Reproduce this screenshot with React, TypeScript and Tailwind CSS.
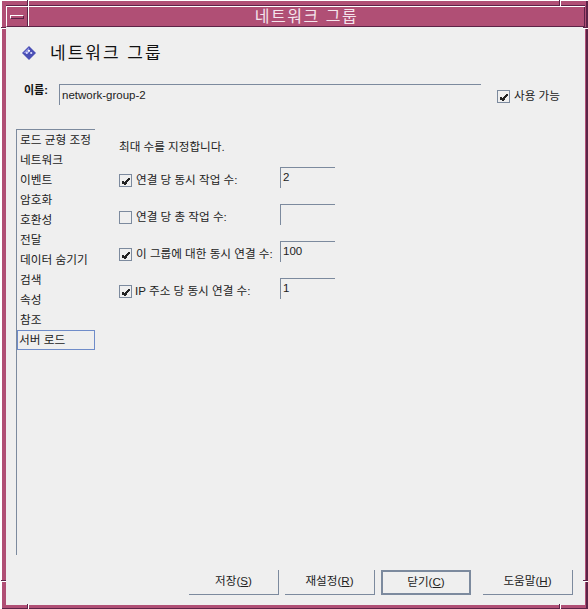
import React from "react";

const font = { fontFamily: '"Liberation Sans","Noto Sans CJK KR",sans-serif' };

function Check({ on }: { on: boolean }) {
  return (
    <span className="block w-[13px] h-[13px] border border-[#7c8a9e] shrink-0 relative">
      {on && (
        <svg className="absolute left-[1px] top-[1px]" width="11" height="11" viewBox="0 0 11 11" shapeRendering="crispEdges">
          <path d="M1 5h2v1h1V5h1V4h1V3h1V2h2v2H8v1H7v1H6v2H5v1H3V8H1z" fill="#222" />
        </svg>
      )}
    </span>
  );
}

function Row({ on, label, value, gap }: { on: boolean; label: string; value: string; gap: string }) {
  return (
    <div className="flex h-[21px] mb-4 items-start">
      <div className="mt-[7px]"><Check on={on} /></div>
      <span className={`flex-1 whitespace-nowrap text-[11.6px] leading-[14px] mt-[6px] ${gap}`}>{label}</span>
      <div className="w-[55px] h-[21px] border-l border-t border-[#7c8a9e] pl-[2px] pt-[2px] text-[11.5px] leading-[14px] text-[#222]">{value}</div>
    </div>
  );
}

const items = ["로드 균형 조정", "네트워크", "이벤트", "암호화", "호환성", "전달", "데이터 숨기기", "검색", "속성", "참조"];

function Btn({ label, u, active }: { label: string; u: string; active?: boolean }) {
  const cls = active
    ? "border-2 border-[#7c8a9e]"
    : "border-r border-b border-[#7c8a9e]";
  return (
    <button className={`w-[90px] h-[25px] pb-[2px] ${cls} text-[11.6px] leading-[14px] text-[#222] flex items-center justify-center`}>
      {label}(<span className="underline">{u}</span>)
    </button>
  );
}

export default function App() {
  return (
    <div style={font} className="w-[588px] h-[609px] relative bg-white pl-[2px] pt-[1px] text-[#222]">
      <div className="w-[586px] h-[608px] bg-[#b04f75] border-r-2 border-b border-[#5c2347] pt-[4px] pl-[4px] pr-[1px] pb-[3px] flex flex-col">
        <div className="flex-1 flex flex-col border-t border-[#5c2347] min-h-0">
          <div className="border-t border-l border-white border-r-0 flex h-[21px] border-b border-b-[#5c2347]">
            <div className="w-[21px] border-r border-[#5c2347] relative">
              <div className="absolute left-[3px] top-[8px] w-[14px] h-[4px] border-t border-l border-white border-r border-b border-r-[#5c2347] border-b-[#5c2347]" />
            </div>
            <div className="flex-1 border-l border-white border-r border-r-[#5c2347] text-center text-[#f4e4ec] text-[16px] leading-[19px] tracking-[1.5px]">네트워크 그룹</div>
          </div>
          <div className="flex-1 bg-[#efefef] flex flex-col min-h-0 pl-[10px]">
            <div className="flex items-center h-[50px] pt-[2px] pl-[6px]">
              <svg width="14" height="14" viewBox="0 0 14 14">
                <path d="M7 0l7 7-7 7-7-7z" fill="#4a4fb5" />
                <path d="M7 1.5L1.5 7H7z" fill="#8c90e0" />
                <circle cx="7" cy="4.8" r="1.1" fill="#fff" />
                <circle cx="4.8" cy="7" r="1.1" fill="#dfe0ff" />
                <circle cx="9.2" cy="7" r="1.1" fill="#dfe0ff" />
              </svg>
              <span className="ml-[14px] mt-[2px] text-[17px] leading-[20px] tracking-[2px] text-[#111]">네트워크 그룹</span>
            </div>
            <div className="flex h-[52px] pt-[7px]">
              <span className="ml-[8px] w-[35px] text-[11px] leading-[14px] font-bold mt-[-1px] text-[#111]">이름:</span>
              <div className="w-[422px] h-[21px] border-l border-t border-[#7c8a9e] pl-[2px] pt-[3px] text-[11.5px] leading-[14px]">network-group-2</div>
              <div className="ml-[16px] mt-[6px]"><Check on /></div>
              <span className="ml-[4px] text-[11.6px] leading-[14px] mt-[5px] whitespace-nowrap">사용 가능</span>
            </div>
            <div className="flex flex-1 min-h-0">
              <div className="w-[79px] h-[426px] border-l border-t border-[#7c8a9e]">
                {items.map((t) => (
                  <div key={t} className="h-[20px] pl-[3px] text-[11.7px] leading-[20px] whitespace-nowrap">{t}</div>
                ))}
                <div className="h-[20px] w-[78px] border border-[#6f8cc9] pl-[1px] text-[11.7px] leading-[18px]">서버 로드</div>
              </div>
              <div className="pl-[24px] w-[240px]">
                <div className="text-[11.6px] leading-[14px] mt-[11px] mb-[13px] whitespace-nowrap">최대 수를 지정합니다.</div>
                <Row on label="연결 당 동시 작업 수:" value="2" gap="ml-[4px]" />
                <Row on={false} label="연결 당 총 작업 수:" value="" gap="ml-[4px]" />
                <Row on label="이 그룹에 대한 동시 연결 수:" value="100" gap="ml-[4px]" />
                <Row on label="IP 주소 당 동시 연결 수:" value="1" gap="ml-[3px]" />
              </div>
            </div>
            <div className="h-[35px] flex gap-[6px] pl-[173px]">
              <Btn label="저장" u="S" />
              <Btn label="재설정" u="R" />
              <Btn label="닫기" u="C" active />
              <div className="ml-[6px]"><Btn label="도움말" u="H" /></div>
            </div>
          </div>
        </div>
      </div>
      {/* resize-frame ticks */}
      <div className="absolute left-[27px] top-0 w-[2px] h-[6px] border-l border-[#5c2347] bg-white" />
      <div className="absolute left-[559px] top-0 w-[2px] h-[6px] border-l border-[#5c2347] bg-white" />
      <div className="absolute left-[1px] top-[27px] w-[5px] h-[2px] border-t border-[#5c2347] bg-white" />
      <div className="absolute right-0 top-[27px] w-[5px] h-[2px] border-t border-[#5c2347] bg-white" />
      <div className="absolute left-[27px] bottom-0 w-[2px] h-[5px] border-l border-[#5c2347] bg-white" />
      <div className="absolute left-[559px] bottom-0 w-[2px] h-[5px] border-l border-[#5c2347] bg-white" />
      <div className="absolute left-[1px] bottom-[27px] w-[5px] h-[2px] border-t border-[#5c2347] bg-white" />
      <div className="absolute right-0 bottom-[27px] w-[5px] h-[2px] border-t border-[#5c2347] bg-white" />
    </div>
  );
}
